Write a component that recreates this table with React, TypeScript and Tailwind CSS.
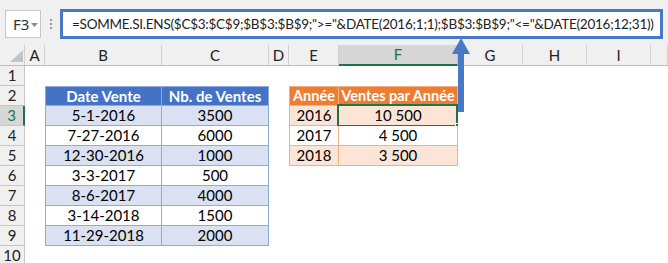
const cols = [
  { l: "A", w: 20 },
  { l: "B", w: 117 },
  { l: "C", w: 107 },
  { l: "D", w: 20 },
  { l: "E", w: 50 },
  { l: "F", w: 119 },
  { l: "G", w: 65 },
  { l: "H", w: 64 },
  { l: "I", w: 64 },
  { l: "", w: 17 },
];

const ventes: [string, string][] = [
  ["5-1-2016", "3500"],
  ["7-27-2016", "6000"],
  ["12-30-2016", "1000"],
  ["3-3-2017", "500"],
  ["8-6-2017", "4000"],
  ["3-14-2018", "1500"],
  ["11-29-2018", "2000"],
];

const parAnnee: [string, string][] = [
  ["2016", "10 500"],
  ["2017", "4 500"],
  ["2018", "3 500"],
];

const formula =
  '=SOMME.SI.ENS($C$3:$C$9;$B$3:$B$9;">="&DATE(2016;1;1);$B$3:$B$9;"<="&DATE(2016;12;31))';

const rows = [1, 2, 3, 4, 5, 6, 7, 8, 9, 10];

function Cell({ row, col }: { row: number; col: number }) {
  const letter = cols[col].l;
  let cls = "bg-white";
  let text = "";

  // blue table B2:C9
  if ((letter === "B" || letter === "C") && row >= 2 && row <= 9) {
    cls = "border-b border-r border-[#8ea9db]";
    if (letter === "B") cls += " border-l";
    if (row === 2) {
      cls += " border-t bg-[#4472c4] text-white font-bold";
      text = letter === "B" ? "Date Vente" : "Nb. de Ventes";
    } else {
      cls += row % 2 === 1 ? " bg-[#d9e1f2]" : " bg-white";
      text = ventes[row - 3][letter === "B" ? 0 : 1];
    }
  }

  // orange table E2:F5
  if ((letter === "E" || letter === "F") && row >= 2 && row <= 5) {
    cls = "border-b border-r border-[#f4b084]";
    if (letter === "E") cls += " border-l";
    if (row === 2) {
      cls += " border-t bg-[#ed7d31] text-white font-bold text-[14.5px]";
      text = letter === "E" ? "Année" : "Ventes par Année";
    } else {
      cls += row % 2 === 1 ? " bg-[#fce4d6]" : " bg-white";
      text = parAnnee[row - 3][letter === "E" ? 0 : 1];
    }
  }

  const active = letter === "F" && row === 3;

  return (
    <div className={`relative flex items-center justify-center whitespace-nowrap ${cls}`}>
      {text}
      {active && (
        <>
          <div className="absolute -left-[2px] -top-[2px] -right-[1px] -bottom-[2px] border-2 border-[#217346]" />
          <div className="absolute -right-[4px] -bottom-[4px] w-[6px] h-[6px] bg-[#217346] border border-white" />
        </>
      )}
    </div>
  );
}

export default function App() {
  return (
    <div className="relative w-[668px] h-[263px] overflow-hidden bg-white text-[#000] font-['Lato','Liberation_Sans',sans-serif]">
      {/* formula bar */}
      <div className="h-[45px] bg-[#f0f0f0] flex items-start pt-[9px] pl-[5px]">
        <div className="mt-[1px] w-[36px] h-[28px] bg-white border border-[#c6c6c6] flex items-center pl-[7px] gap-[2px] text-[15px] text-[#333] font-['Noto_Sans',sans-serif]">
          <span>F3</span>
          <svg width="7" height="4" viewBox="0 0 7 4" className="mt-[1px]">
            <path d="M0 0h7L3.5 4z" fill="#8a8a8a" />
          </svg>
        </div>
        <div className="w-[19px] h-[28px] flex flex-col items-center justify-center gap-[2px] pt-[2px]">
          <span className="w-[2px] h-[2px] bg-[#9a9a9a]" />
          <span className="w-[2px] h-[2px] bg-[#9a9a9a]" />
          <span className="w-[2px] h-[2px] bg-[#9a9a9a]" />
        </div>
        <div className="w-[603px] h-[30px] bg-white border-[3px] border-[#4a78c8] flex items-center pl-[9px] text-[13.5px] tracking-[-0.25px] text-[#222] whitespace-nowrap">
          {formula}
        </div>
      </div>

      {/* column headers */}
      <div className="flex h-[21px] bg-[#f0f0f0] border-b border-[#bfbfbf] text-[15px] text-[#222]">
        <div className="relative w-[25px] border-r border-[#d0d0d0]">
          <svg width="13" height="12" viewBox="0 0 13 12" className="absolute left-[10px] top-[5px]">
            <path d="M13 0v12H0z" fill="#c4c4c4" />
          </svg>
        </div>
        {cols.map((c) => (
          <div
            key={c.l + c.w}
            style={{ width: c.w }}
            className={
              c.l === "F"
                ? "flex items-center justify-center bg-[#d6d6d6] border-r border-[#bfbfbf] border-b-2 border-b-[#217346] -mb-[1px] text-[#217346]"
                : "flex items-center justify-center border-r border-[#d0d0d0]"
            }
          >
            {c.l}
          </div>
        ))}
      </div>

      {/* rows */}
      <div className="grid grid-cols-[25px_20px_117px_107px_20px_50px_119px_65px_64px_64px_17px] auto-rows-[20px] text-[15px]">
        {rows.map((r) => (
          <div key={r} className="contents">
            <div
              className={
                r === 3
                  ? "flex items-center justify-center bg-[#d6d6d6] border-b border-[#c6c6c6] border-r-2 border-r-[#217346] text-[#217346]"
                  : "flex items-center justify-center bg-[#f0f0f0] border-b border-r border-[#c6c6c6] text-[#222]"
              }
            >
              {r}
            </div>
            {cols.map((_, ci) => (
              <Cell key={ci} row={r} col={ci} />
            ))}
          </div>
        ))}
      </div>

      {/* pointer from formula bar to the active cell */}
      <svg width="22" height="76" viewBox="0 0 22 76" className="absolute left-[450px] top-[37px]">
        <path d="M11 1L2 17h18z" fill="#4a78c8" />
        <rect x="8" y="16" width="6" height="59" fill="#4a78c8" />
      </svg>
    </div>
  );
}
